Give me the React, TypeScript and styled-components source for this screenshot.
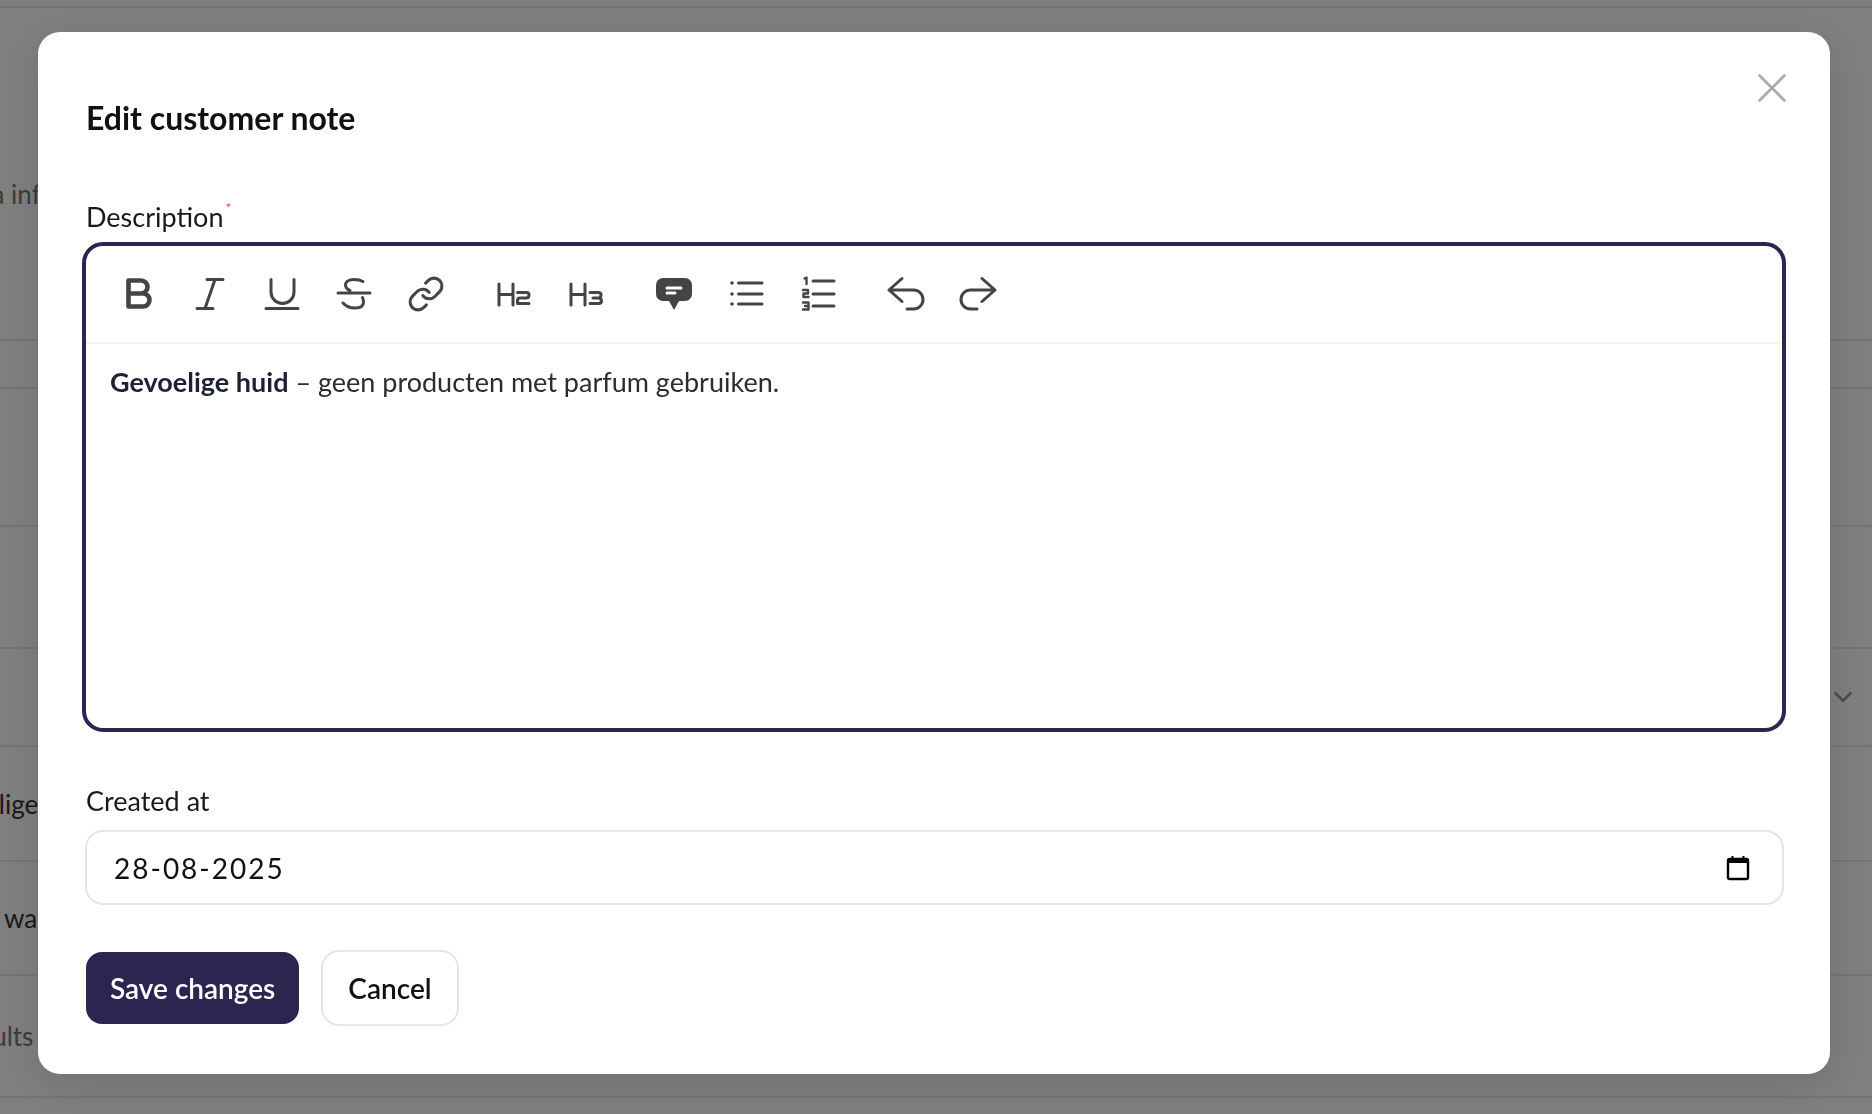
import styled, { createGlobalStyle } from 'styled-components'
import { ChevronDown } from 'lucide-react'

const GlobalStyle = createGlobalStyle`
  html, body {
    margin: 0;
    padding: 0;
    background: #fff;
    overflow: hidden;
    font-family: Lato, "Open Sans", sans-serif;
  }
  * {
    box-sizing: border-box;
  }
`

const INK = '#2a2650'
const ICON = '#444'

const rows = [
  { id: 'top', height: 8, text: '', indent: 0 },
  { id: 'info', height: 333, text: 'Extra info over de klant', indent: -55, top: true, muted: true },
  { id: 'gap', height: 48, text: '', indent: 0 },
  { id: 'a', height: 138, text: '', indent: 0 },
  { id: 'b', height: 122, text: '', indent: 0 },
  { id: 'skin', height: 98, text: '', indent: 0, chevron: true },
  { id: 'huid', height: 115, text: 'Gevoelige huid', indent: -75 },
  { id: 'water', height: 114, text: 'Drink water, veel', indent: -65 },
  { id: 'results', height: 122, text: 'Goede results', indent: -124, muted: true },
]

const Page = styled.div`
  height: 1114px;
  overflow: hidden;
`

const Row = styled.div<{ $height: number; $top?: boolean }>`
  height: ${({ $height }) => $height}px;
  display: flex;
  align-items: ${({ $top }) => ($top ? 'flex-start' : 'center')};
  justify-content: space-between;
  padding-top: ${({ $top }) => ($top ? '170px' : '0')};
  padding-right: 14px;
  border-bottom: 2px solid #e9e9e9;
`

const RowText = styled.span<{ $indent: number; $muted?: boolean }>`
  margin-left: ${({ $indent }) => $indent}px;
  font-size: 26px;
  white-space: nowrap;
  color: ${({ $muted }) => ($muted ? '#777' : '#333')};
`

const Overlay = styled.div`
  position: fixed;
  inset: 0;
  display: flex;
  padding: 32px 42px 40px 38px;
  background: rgba(0, 0, 0, 0.5);
`

const Modal = styled.div`
  position: relative;
  flex: 1;
  display: flex;
  flex-direction: column;
  padding: 0 48px;
  background: #fff;
  border-radius: 22px;
  box-shadow: 0 10px 40px rgba(0, 0, 0, 0.12);
`

const Title = styled.h2`
  margin: 68px 0 0;
  font-size: 32px;
  line-height: 36px;
  font-weight: 700;
  color: #111;
`

const CloseButton = styled.button`
  position: absolute;
  top: 38px;
  right: 40px;
  width: 36px;
  height: 36px;
  padding: 0;
  border: 0;
  background: none;
  color: #a9a9a9;
`

const Label = styled.label`
  display: block;
  font-size: 27px;
  line-height: 34px;
  color: #1a1a1a;

  sup {
    position: relative;
    top: -4px;
    margin-left: 2px;
    font-size: 14px;
    line-height: 0;
    vertical-align: super;
    color: #d9534f;
  }
`

const DescriptionLabel = styled(Label)`
  margin-top: 64px;
`

const DateLabel = styled(Label)`
  margin-top: 56px;
`

const Editor = styled.div`
  height: 482px;
  margin-top: 12px;
  border-radius: 17px;
  outline: 4px solid ${INK};
  background: #fff;
`

const Toolbar = styled.div`
  display: flex;
  gap: 40px;
  height: 98px;
  padding: 24px 28px;
  border-bottom: 2px solid #f3f3f3;
`

const ToolGroup = styled.div`
  display: flex;
  gap: 24px;
`

const ToolButton = styled.button`
  width: 48px;
  height: 48px;
  padding: 0;
  border: 0;
  background: none;
  color: ${ICON};
`

const Content = styled.div`
  padding: 20px 24px;
  font-size: 27px;
  line-height: 36px;
  color: #2b2b33;

  strong {
    font-weight: 700;
    color: #1d2233;
  }
`

const DateField = styled.div`
  display: flex;
  align-items: center;
  justify-content: space-between;
  height: 75px;
  margin: 12px -2px 0 -1px;
  padding: 0 32px 0 27px;
  border: 2px solid #e5e5e5;
  border-radius: 18px;
  font-size: 28px;
  letter-spacing: 2px;
  color: #111;
`

const Actions = styled.div`
  display: flex;
  align-items: center;
  gap: 22px;
  margin-top: 45px;
`

const SaveButton = styled.button`
  height: 72px;
  padding: 0 24px;
  border: 0;
  border-radius: 16px;
  background: ${INK};
  color: #fff;
  font: 600 28px Lato, sans-serif;
`

const CancelButton = styled.button`
  height: 76px;
  padding: 0 25px;
  border: 2px solid #e5e5e5;
  border-radius: 18px;
  background: #fff;
  color: #111;
  font: 600 28px Lato, sans-serif;
`

const Icon = ({ children }: { children: React.ReactNode }) => (
  <svg width="48" height="48" viewBox="0 0 48 48" fill="none" stroke="currentColor" strokeWidth="3" strokeLinecap="round" strokeLinejoin="round">
    {children}
  </svg>
)

const tools = [
  [
    <Icon key="b">
      <path strokeWidth="4.6" d="M14.5 10.5h12.5a6.5 6.5 0 0 1 0 13h-12.5zM14.5 23.5h14.5a6.5 6.5 0 0 1 0 13h-14.5z" />
    </Icon>,
    <Icon key="i">
      <path d="M21 9.5h16M11 38.5h16M29 9.5l-10 29" />
    </Icon>,
    <Icon key="u">
      <path d="M13 9.5V22a11.5 11.5 0 0 0 23 0V9.5M8 38.5h32" />
    </Icon>,
    <Icon key="s">
      <path d="M8 23h32M33 11.5C30 9.8 27 9.5 24 9.5c-5 0-8.5 2-8.5 5.5 0 3 2 4.5 4.5 5.5M13 33c3 3.5 7 5 12 5s8.500-2 8.500-6c0-2-.5-3.500-1-4.500" />
    </Icon>,
    <Icon key="l">
      <g transform="translate(4.800 4.800) scale(1.600)" strokeWidth="1.900">
        <path d="M10 13a5 5 0 0 0 7.540.540l3-3a5 5 0 0 0-7.070-7.070l-1.720 1.710" />
        <path d="M14 11a5 5 0 0 0-7.540-.540l-3 3a5 5 0 0 0 7.070 7.070l1.710-1.710" />
      </g>
    </Icon>,
  ],
  [
    <Icon key="h2">
      <path d="M9 14v21M23 14v21M9 24.500h14M27.500 22.500h9q2.500 0 2.500 2.500 0 3-3 3h-6q-2.500 0-2.500 2.500v3H39" />
    </Icon>,
    <Icon key="h3">
      <path d="M9 14v21M23 14v21M9 24.500h14M28 22.500h8.500q2.500 0 2.500 2.500 0 3-2.500 3H31m5.500 0q3 0 3 3 0 2.500-3 2.500H28" />
    </Icon>,
  ],
  [
    <Icon key="c">
      <path fill="currentColor" stroke="none" d="M13 8h22a7 7 0 0 1 7 7v9a7 7 0 0 1-7 7h-6l-5 9-5-9h-6a7 7 0 0 1-7-7v-9a7 7 0 0 1 7-7z" />
      <path stroke="#fff" d="M17 18h14M17 23h8" />
    </Icon>,
    <Icon key="ul">
      <path d="M16.500 13H40M16.500 24H40M16.500 34H40" />
      <path strokeWidth="3.600" d="M10 13h.01M10 24h.01M10 34h.01" />
    </Icon>,
    <Icon key="ol">
      <path d="M19 11h21M19 24h21M19 36h21" />
      <path strokeWidth="2.400" d="M10.500 8.500l2-1V14M9 20h5v3.500H9.500V27H14.500M9 32.500h5.500v7H9M11 36h3.500" />
    </Icon>,
  ],
  [
    <Icon key="undo">
      <path d="M20 8.500L7 20l13 11.500M7 20h24.500a9.500 9.500 0 0 1 0 19H25" />
    </Icon>,
    <Icon key="redo">
      <path d="M28 8.500L41 20 28 31.500M41 20H16.500a9.500 9.500 0 0 0 0 19H23" />
    </Icon>,
  ],
]

const App = () => (
  <>
    <GlobalStyle />
    <Page>
      {rows.map((row) => (
        <Row key={row.id} $height={row.height} $top={row.top}>
          <RowText $indent={row.indent} $muted={row.muted}>
            {row.text}
          </RowText>
          {row.chevron && <ChevronDown size={30} color="#999" strokeWidth={2.200} />}
        </Row>
      ))}
    </Page>
    <Overlay>
      <Modal>
        <Title>Edit customer note</Title>
        <CloseButton aria-label="Close">
          <svg width="36" height="36" viewBox="0 0 36 36" stroke="currentColor" strokeWidth="2.600" strokeLinecap="round">
            <path d="M5.500 5.500l25 25M30.500 5.500l-25 25" />
          </svg>
        </CloseButton>
        <DescriptionLabel>
          Description<sup>*</sup>
        </DescriptionLabel>
        <Editor>
          <Toolbar>
            {tools.map((group, i) => (
              <ToolGroup key={i}>
                {group.map((icon) => (
                  <ToolButton key={icon.key}>{icon}</ToolButton>
                ))}
              </ToolGroup>
            ))}
          </Toolbar>
          <Content>
            <strong>Gevoelige huid</strong> – geen producten met parfum gebruiken.
          </Content>
        </Editor>
        <DateLabel>Created at</DateLabel>
        <DateField>
          28-08-2025
          <svg width="24" height="26" viewBox="0 0 24 26" fill="none" stroke="#000">
            <rect x="2" y="4" width="20" height="20" rx="1.500" strokeWidth="2.400" />
            <path strokeWidth="4" d="M2 6h20" />
            <path strokeWidth="2" d="M6.500 1v3M17.500 1v3" />
          </svg>
        </DateField>
        <Actions>
          <SaveButton>Save changes</SaveButton>
          <CancelButton>Cancel</CancelButton>
        </Actions>
      </Modal>
    </Overlay>
  </>
)

export default App
